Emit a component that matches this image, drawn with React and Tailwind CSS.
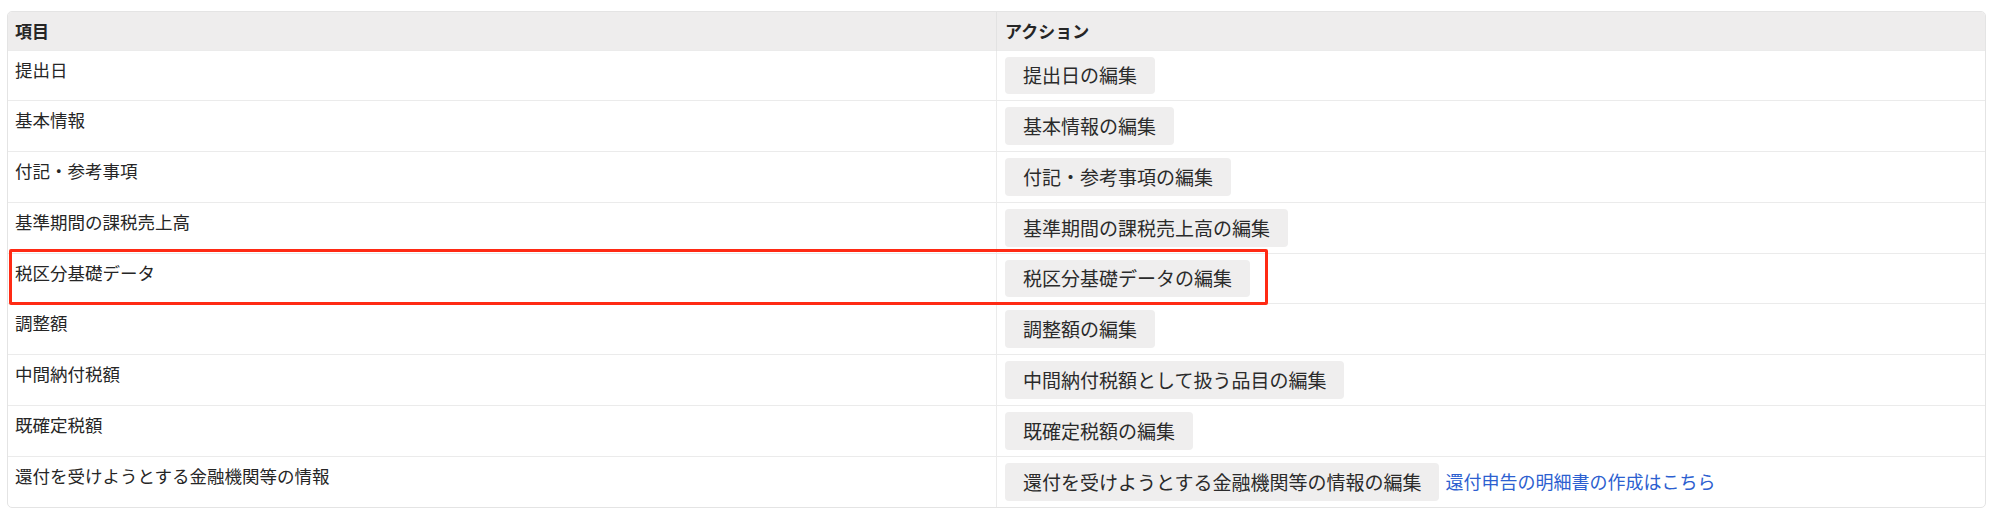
import React from 'react';

const rows = [
  { label: '提出日', action: '提出日の編集' },
  { label: '基本情報', action: '基本情報の編集' },
  { label: '付記・参考事項', action: '付記・参考事項の編集' },
  { label: '基準期間の課税売上高', action: '基準期間の課税売上高の編集' },
  { label: '税区分基礎データ', action: '税区分基礎データの編集' },
  { label: '調整額', action: '調整額の編集' },
  { label: '中間納付税額', action: '中間納付税額として扱う品目の編集' },
  { label: '既確定税額', action: '既確定税額の編集' },
  {
    label: '還付を受けようとする金融機関等の情報',
    action: '還付を受けようとする金融機関等の情報の編集',
    link: '還付申告の明細書の作成はこちら',
  },
];

const App = () => {
  return (
    <div
      className="relative min-h-[519px] bg-white pl-[7px] pr-[13px] pt-[11px] text-[#262626]"
      style={{ fontFamily: '"Noto Sans CJK JP", "Noto Sans", sans-serif' }}
    >
      <div className="overflow-hidden rounded-[5px] border border-[#e4e4e4]">
        <table className="w-full table-fixed border-collapse">
          <thead>
            <tr className="bg-[#eeeded]">
              <th className="h-[38px] w-1/2 border-r border-[#e2e2e2] px-[7px] text-left text-[17px] font-bold leading-[25px]">
                項目
              </th>
              <th className="h-[38px] px-[8px] text-left text-[17px] font-bold leading-[25px]">
                アクション
              </th>
            </tr>
          </thead>
          <tbody>
            {rows.map((row) => (
              <tr key={row.label} className="border-t border-[#ebebeb]">
                <td className="border-r border-[#ebebeb] px-[7px] py-[6px] align-top text-[17.5px] leading-[26px]">
                  {row.label}
                </td>
                <td className="px-[8px] py-[6px] align-top">
                  <div className="flex items-center gap-[6px]">
                    <button className="flex h-[37.8px] items-center rounded-[4px] bg-[#efeeee] px-[18px] text-[19px] text-[#2b2b2b]">
                      {row.action}
                    </button>
                    {row.link && (
                      <a href="#" className="text-[18px] text-[#2d5fd0]">
                        {row.link}
                      </a>
                    )}
                  </div>
                </td>
              </tr>
            ))}
          </tbody>
        </table>
      </div>

      {/* highlight */}
      <div className="pointer-events-none absolute left-[9px] top-[249px] h-[56px] w-[1259px] rounded-[2px] border-[3px] border-[#ff2a14]" />
    </div>
  );
};

export default App;
